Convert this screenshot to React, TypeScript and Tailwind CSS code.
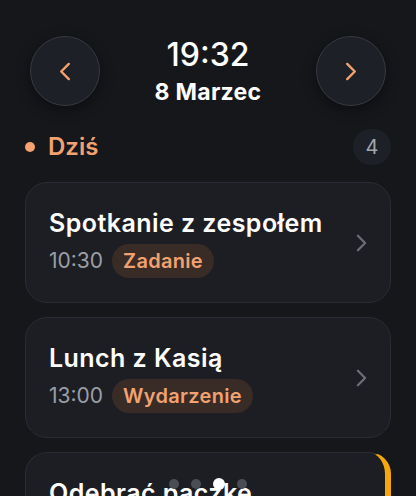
const ITEMS = [
  { title: "Spotkanie z zespołem", time: "10:30", tag: "Zadanie" },
  { title: "Lunch z Kasią", time: "13:00", tag: "Wydarzenie" },
  { title: "Odebrać paczkę", time: "16:00", tag: "Zadanie", accent: true },
];

function Chevron({ dir, className }: { dir: "left" | "right"; className: string }) {
  return (
    <svg viewBox="0 0 12 20" className={className} fill="none" stroke="currentColor" strokeWidth={2.5} strokeLinecap="round" strokeLinejoin="round">
      {dir === "left" ? <path d="M10 2 L2 10 L10 18" /> : <path d="M2 2 L10 10 L2 18" />}
    </svg>
  );
}

function RoundButton({ dir }: { dir: "left" | "right" }) {
  return (
    <button className="flex h-[70px] w-[70px] items-center justify-center rounded-full border-[1.5px] border-[#373a42] bg-[#1e2027] shadow-[0_4px_14px_rgba(0,0,0,0.45)]">
      <Chevron dir={dir} className="h-[19px] w-[12px] text-[#f2a271]" />
    </button>
  );
}

function EventCard({ title, time, tag, accent }: { title: string; time: string; tag: string; accent?: boolean }) {
  return (
    <div
      className={
        "flex items-center justify-between rounded-[22px] border border-[#2a2c33] bg-[#1c1e24] py-6 pl-[23px] pr-[23px] " +
        (accent ? "border-r-[6px] border-r-[#f6a70c]" : "")
      }
    >
      <div className="flex flex-col">
        <div className="text-[25px] leading-8 font-semibold tracking-[0.45px] text-white">{title}</div>
        <div className="mt-[5px] flex items-center gap-[9px]">
          <span className="text-[21px] text-[#9b9ea6]">{time}</span>
          <span className="flex h-[34px] items-center rounded-full bg-[#392c26] px-[11px] text-[20px] font-semibold tracking-[0.3px] text-[#f2a271]">
            {tag}
          </span>
        </div>
      </div>
      <Chevron dir="right" className="h-[18px] w-[11px] text-[#6b6e76]" />
    </div>
  );
}

export default function App() {
  return (
    <div
      className="relative h-[496px] w-full overflow-hidden bg-[#16171b] px-[25px]"
      style={{ fontFamily: "Inter, 'Noto Sans', sans-serif" }}
    >
      <header className="flex items-center justify-between px-[5px] pt-[36px]">
        <RoundButton dir="left" />
        <div className="flex flex-col items-center">
          <div className="text-[32px] leading-9 font-medium text-white">19:32</div>
          <div className="mt-[5px] text-[23px] leading-7 font-bold tracking-[0.3px] text-white">8 Marzec</div>
        </div>
        <RoundButton dir="right" />
      </header>

      <div className="mt-[23px] flex items-center justify-between">
        <div className="flex items-center gap-[13px]">
          <span className="h-[10px] w-[10px] rounded-full bg-[#f2a271]" />
          <span className="text-[24px] font-semibold text-[#f2a271]">Dziś</span>
        </div>
        <span className="flex h-[36px] w-[38px] items-center justify-center rounded-full bg-[#1e2028] text-[20px] text-[#a3a6ad]">
          4
        </span>
      </div>

      <div className="mt-[17px] flex flex-col gap-[14px]">
        {ITEMS.map((it) => (
          <EventCard key={it.title} {...it} />
        ))}
      </div>

      <div className="absolute bottom-[6px] left-1/2 flex -translate-x-1/2 items-center gap-[12px]">
        <span className="h-[10px] w-[10px] rounded-full bg-[#4b4d54]" />
        <span className="h-[10px] w-[10px] rounded-full bg-[#4b4d54]" />
        <span className="h-[12px] w-[12px] rounded-full bg-white" />
        <span className="h-[10px] w-[10px] rounded-full bg-[#4b4d54]" />
      </div>
    </div>
  );
}
